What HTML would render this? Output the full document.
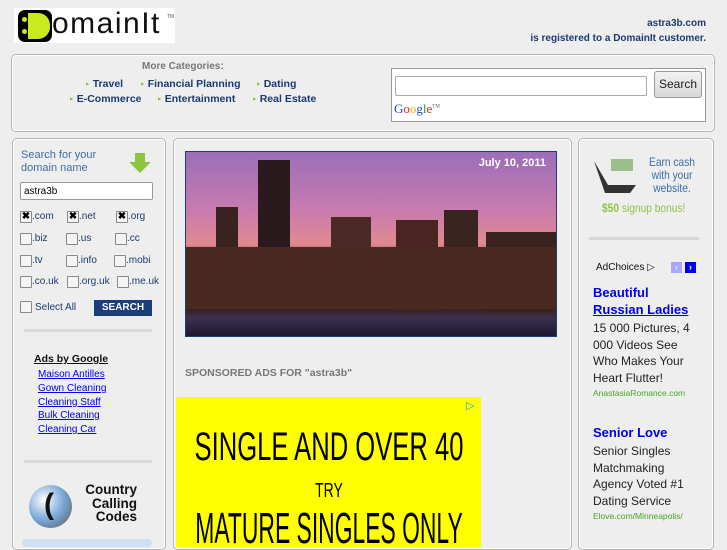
<!DOCTYPE html>
<html><head><style>
body{margin:0;width:727px;height:545px;overflow:hidden;background:#eee;font-family:"Liberation Sans",sans-serif;position:relative}
.a{position:absolute}
.p{position:absolute;border:1px solid #b5b5b5;border-radius:5px;background:#eee;box-shadow:inset 0 0 0 1px #fff}
.nav{color:#1a3a73;font-weight:bold;font-size:10.5px}
.nav i{color:#8cc63f;font-style:normal;font-size:8px;margin-right:3px}
.cb{position:absolute;width:10px;height:10px;border:1px solid #888;background:#f4f4f4;border-radius:1px}
.cl{position:absolute;font-size:10px;color:#1a3a73}
.x{font-size:10px;line-height:10px;text-align:center;font-weight:bold;color:#000}
.lnk{color:#0000ee;text-decoration:underline;font-size:10px;position:absolute;left:38px}
.rt{position:absolute;left:593px;font-size:12px;color:#222;line-height:16.5px}
.rh{color:#0000ee;font-weight:bold;font-size:13px}
.rg{color:#44aa22;font-size:8.5px}
.ad{position:absolute;left:-247px;width:800px;text-align:center;white-space:nowrap;color:#000}
</style></head><body>
<!-- logo -->
<div class="a" style="left:14px;top:8px;width:161px;height:35px;background:#fff"></div>
<div class="a" style="left:18px;top:10px;width:34px;height:32px;background:#000;border-radius:7px"></div>
<div class="a" style="left:28px;top:13px;width:22px;height:26px;background:#c8ea1e;border-radius:0 12px 12px 0"></div>
<div class="a" style="left:22px;top:17px;width:5px;height:5px;background:#c8ea1e;border-radius:3px"></div>
<div class="a" style="left:22px;top:29px;width:5px;height:5px;background:#c8ea1e;border-radius:3px"></div>
<div class="a" style="left:52px;top:7px;font-size:30px;color:#111;letter-spacing:1.5px">omainIt</div>
<div class="a" style="left:167px;top:14px;font-size:5px;color:#555">TM</div>
<div class="a" style="right:21px;top:16px;text-align:right;font-size:10px;font-weight:bold;color:#1a3a73;line-height:15px">astra3b.com<br>is registered to a DomainIt customer.</div>
<!-- top panel -->
<div class="p" style="left:11px;top:54px;width:702px;height:76px"></div>
<div class="a" style="left:142px;top:61px;font-size:10px;font-weight:bold;color:#777">More Categories:</div>
<div class="a nav" style="left:85px;top:78px"><i>&#8227;</i>Travel</div>
<div class="a nav" style="left:140px;top:78px"><i>&#8227;</i>Financial Planning</div>
<div class="a nav" style="left:256px;top:78px"><i>&#8227;</i>Dating</div>
<div class="a nav" style="left:69px;top:93px"><i>&#8227;</i>E-Commerce</div>
<div class="a nav" style="left:157px;top:93px"><i>&#8227;</i>Entertainment</div>
<div class="a nav" style="left:252px;top:93px"><i>&#8227;</i>Real Estate</div>
<div class="a" style="left:391px;top:68px;width:313px;height:52px;background:#fff;border:1px solid #999"></div>
<div class="a" style="left:395px;top:76px;width:250px;height:18px;background:#fff;border:1px solid #aaa;border-radius:2px"></div>
<div class="a" style="left:654px;top:71px;width:46px;height:25px;background:linear-gradient(#f2f2f2,#d8d8d8);border:1px solid #999;border-radius:3px;font-size:12px;line-height:25px;text-align:center;color:#222">Search</div>
<div class="a" style="left:394px;top:101px;font-size:13px;font-family:'Liberation Serif',serif"><span style="color:#2153c7">G</span><span style="color:#d62d20">o</span><span style="color:#f1b100">o</span><span style="color:#2153c7">g</span><span style="color:#189e3a">l</span><span style="color:#d62d20">e</span><sup style="font-size:5px;color:#555">TM</sup></div>
<!-- left panel -->
<div class="p" style="left:12px;top:138px;width:152px;height:410px"></div>
<div class="a" style="left:21px;top:149px;font-size:11px;color:#3d6ea8;line-height:13px">Search for your<br>domain name</div>
<svg class="a" style="left:128px;top:151px" width="24" height="24"><path d="M7 2h10v9h6L12 22 1 11h6z" fill="#8cc63f"/></svg>
<div class="a" style="left:20px;top:182px;width:133px;height:18px;background:#fff;border:1px solid #999;border-radius:2px;font-size:10px;line-height:18px;padding-left:3px;box-sizing:border-box">astra3b</div>
<div class="cb x" style="left:20px;top:211px">&#10006;</div><div class="cl" style="left:32px;top:211px">.com</div>
<div class="cb x" style="left:67px;top:211px">&#10006;</div><div class="cl" style="left:79px;top:211px">.net</div>
<div class="cb x" style="left:116px;top:211px">&#10006;</div><div class="cl" style="left:128px;top:211px">.org</div>
<div class="cb" style="left:20px;top:233px"></div><div class="cl" style="left:32px;top:233px">.biz</div>
<div class="cb" style="left:66px;top:233px"></div><div class="cl" style="left:78px;top:233px">.us</div>
<div class="cb" style="left:115px;top:233px"></div><div class="cl" style="left:127px;top:233px">.cc</div>
<div class="cb" style="left:20px;top:255px"></div><div class="cl" style="left:32px;top:255px">.tv</div>
<div class="cb" style="left:66px;top:255px"></div><div class="cl" style="left:78px;top:255px">.info</div>
<div class="cb" style="left:114px;top:255px"></div><div class="cl" style="left:126px;top:255px">.mobi</div>
<div class="cb" style="left:20px;top:276px"></div><div class="cl" style="left:32px;top:276px">.co.uk</div>
<div class="cb" style="left:67px;top:276px"></div><div class="cl" style="left:79px;top:276px">.org.uk</div>
<div class="cb" style="left:117px;top:276px"></div><div class="cl" style="left:129px;top:276px">.me.uk</div>
<div class="cb" style="left:20px;top:301px"></div><div class="cl" style="left:35px;top:302px">Select All</div>
<div class="a" style="left:94px;top:300px;width:58px;height:16px;background:#1a3d7c;color:#fff;font-size:10px;font-weight:bold;line-height:16px;text-align:center">SEARCH</div>
<div class="a" style="left:24px;top:329px;width:128px;height:3px;background:#d8d8d8"></div>
<div class="a" style="left:34px;top:353px;font-size:10.5px;font-weight:bold;text-decoration:underline;color:#111">Ads by Google</div>
<div class="lnk" style="top:369px">Maison Antilles</div>
<div class="lnk" style="top:383px">Gown Cleaning</div>
<div class="lnk" style="top:397px">Cleaning Staff</div>
<div class="lnk" style="top:410px">Bulk Cleaning</div>
<div class="lnk" style="top:424px">Cleaning Car</div>
<div class="a" style="left:24px;top:460px;width:128px;height:3px;background:#d8d8d8"></div>
<div class="a" style="left:29px;top:485px;width:43px;height:43px;border-radius:50%;background:radial-gradient(circle at 35% 35%,#fff,#7aa8d8 50%,#555)"></div>
<div class="a" style="left:44px;top:488px;font-size:30px;font-weight:bold;color:#111">(</div>
<div class="a" style="left:74px;top:483px;font-size:13.5px;font-weight:bold;line-height:13.5px;text-align:right;width:63px;color:#111">Country<br>Calling<br>Codes</div>
<div class="a" style="left:22px;top:539px;width:130px;height:8px;background:#cfe0f3;border-radius:4px"></div>
<!-- middle panel -->
<div class="p" style="left:173px;top:138px;width:397px;height:410px"></div>
<div class="a" style="left:185px;top:151px;width:370px;height:184px;border:1px solid #1a3d7c;background:linear-gradient(#9a6fb8 0%,#c67ab0 30%,#e08a90 50%,#5a2e28 60%,#3a1e18 85%,#3a3050 90%,#201830 100%);overflow:hidden">
<div class="a" style="left:72px;top:8px;width:32px;height:140px;background:#2a1a1e"></div>
<div class="a" style="left:30px;top:55px;width:22px;height:100px;background:#3a2220"></div>
<div class="a" style="left:145px;top:65px;width:40px;height:90px;background:#4a2a24"></div>
<div class="a" style="left:210px;top:68px;width:42px;height:90px;background:#4a2420"></div>
<div class="a" style="left:258px;top:58px;width:34px;height:100px;background:#3a2422"></div>
<div class="a" style="left:300px;top:80px;width:70px;height:80px;background:#3a221e"></div>
<div class="a" style="left:0;top:95px;width:370px;height:62px;background:#4a2a20"></div>
<div class="a" style="right:10px;top:5px;color:#fff;font-size:11px;font-weight:bold">July 10, 2011</div>
</div>
<div class="a" style="left:185px;top:367px;font-size:10.5px;font-weight:bold;color:#777">SPONSORED ADS FOR "astra3b"</div>
<div class="a" style="left:176px;top:397px;width:305px;height:150px;background:#ffff00;overflow:hidden">
<div class="ad" style="top:28px;font-size:40px;line-height:44px;transform:scaleX(0.64)">SINGLE AND OVER 40</div>
<div class="ad" style="top:82px;font-size:20px;line-height:24px;transform:scaleX(0.7)">TRY</div>
<div class="ad" style="top:108px;font-size:44px;line-height:48px;transform:scaleX(0.52)">MATURE SINGLES ONLY</div>
<div class="a" style="left:290px;top:2px;color:#29a8d8;font-size:11px">&#9655;</div>
</div>
<!-- right panel -->
<div class="p" style="left:578px;top:138px;width:134px;height:410px"></div>
<svg class="a" style="left:591px;top:157px" width="52" height="40"><path d="M3 4l14 24h28l-6 8H14z" fill="#333"/><rect x="20" y="2" width="22" height="12" fill="#9bbf8a"/></svg>
<div class="a" style="left:645px;top:156px;font-size:12px;color:#3d6ea8;line-height:13px;text-align:center;transform:scaleX(0.85)">Earn cash<br>with your<br>website.</div>
<div class="a" style="left:602px;top:201px;font-size:12px;color:#8cc63f;transform:scaleX(0.85);transform-origin:left"><b>$50</b> signup bonus!</div>
<div class="a" style="left:589px;top:237px;width:110px;height:3px;background:#d8d8d8"></div>
<div class="a" style="left:596px;top:262px;font-size:10px;color:#111">AdChoices &#9655;</div>
<div class="a" style="left:671px;top:262px;width:11px;height:11px;background:#a8a8ff;color:#fff;font-size:9px;line-height:11px;text-align:center">&#8249;</div>
<div class="a" style="left:685px;top:262px;width:11px;height:11px;background:#0000ee;color:#fff;font-size:9px;line-height:11px;text-align:center;font-weight:bold">&#8250;</div>
<div class="rt" style="top:285px"><span class="rh">Beautiful<br><u>Russian Ladies</u></span></div>
<div class="rt" style="top:320px">15 000 Pictures, 4<br>000 Videos See<br>Who Makes Your<br>Heart Flutter!</div>
<div class="rt rg" style="top:385px">AnastasiaRomance.com</div>
<div class="rt" style="top:425px"><span class="rh">Senior Love</span></div>
<div class="rt" style="top:443px">Senior Singles<br>Matchmaking<br>Agency Voted #1<br>Dating Service</div>
<div class="rt rg" style="top:508px">Elove.com/Minneapolis/</div>
</body></html>
